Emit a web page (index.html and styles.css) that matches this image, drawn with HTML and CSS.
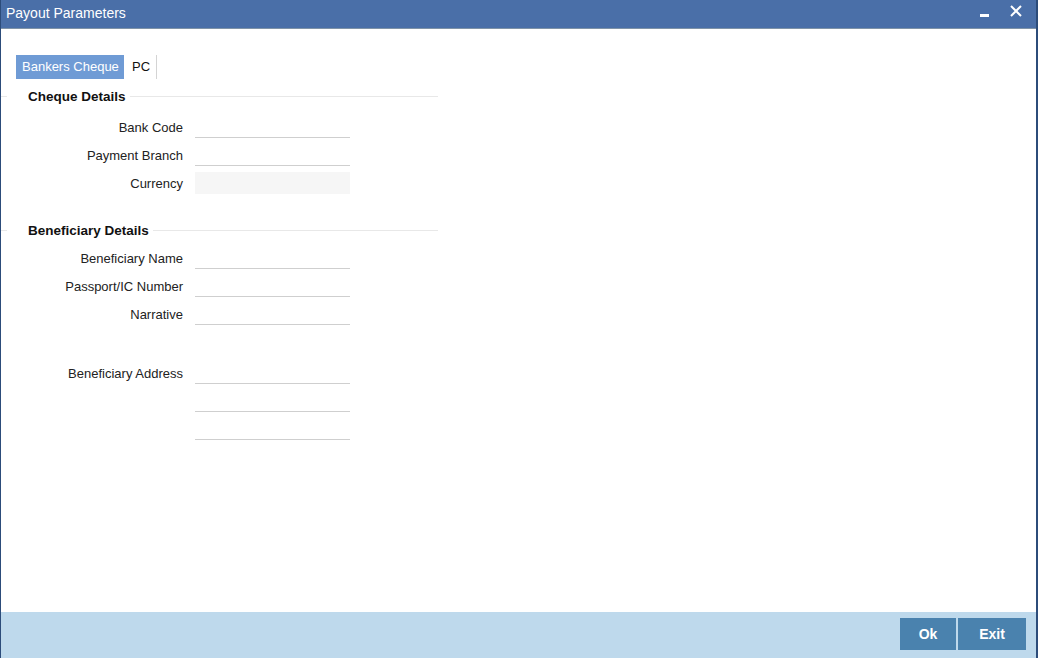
FILE: index.html
```html
<!DOCTYPE html>
<html lang="en">
<head>
  <meta charset="UTF-8">
  <title>Payout Parameters</title>
  <link rel="stylesheet" href="styles.css">
</head>
<body>
  <div class="window">
    <header class="titlebar">
      <span class="title">Payout Parameters</span>
      <div class="controls">
        <span class="minimize"></span>
        <svg class="close" width="12" height="12" viewBox="0 0 12 12">
          <path d="M1 1 L11 11 M11 1 L1 11" stroke="#fff" stroke-width="2"/>
        </svg>
      </div>
    </header>

    <main class="content">
      <!-- Abas -->
      <ul class="tabs">
        <li class="tab active">Bankers Cheque</li>
        <li class="tab">PC</li>
      </ul>

      <!-- Cheque Details -->
      <section class="section">
        <div class="legend"><span>Cheque Details</span></div>
        <div class="fields">
          <div class="row"><label>Bank Code</label><span class="input"></span></div>
          <div class="row"><label>Payment Branch</label><span class="input"></span></div>
          <div class="row"><label>Currency</label><span class="input disabled"></span></div>
        </div>
      </section>

      <!-- Beneficiary Details -->
      <section class="section second">
        <div class="legend"><span>Beneficiary Details</span></div>
        <div class="fields tight">
          <div class="row"><label>Beneficiary Name</label><span class="input"></span></div>
          <div class="row"><label>Passport/IC Number</label><span class="input"></span></div>
          <div class="row"><label>Narrative</label><span class="input"></span></div>
          <div class="row address"><label>Beneficiary Address</label><span class="input"></span></div>
          <div class="row"><label></label><span class="input"></span></div>
          <div class="row"><label></label><span class="input"></span></div>
        </div>
      </section>
    </main>

    <footer class="footer">
      <button class="button">Ok</button>
      <button class="button exit">Exit</button>
    </footer>
  </div>
</body>
</html>
```

FILE: styles.css
```css
/* Estilos Globais */
* {
  margin: 0;
  padding: 0;
  box-sizing: border-box;
}
html, body {
  height: 100%;
}
body {
  font-family: 'Liberation Sans', Arial, sans-serif;
  font-size: 13px;
  color: #222;
  background-color: #fff;
}
.window {
  width: 1038px;
  height: 658px;
  display: flex;
  flex-direction: column;
  border-left: 1px solid #2c4c7a;
  border-right: 2px solid #2c4c7a;
  background-color: #fff;
}

/* Barra de titulo */
.titlebar {
  height: 29px;
  display: flex;
  align-items: center;
  justify-content: space-between;
  padding: 0 14px 0 5px;
  background-color: #4a6fa8;
  border-bottom: 1px solid #7f93a8;
  color: #fff;
}
.title {
  font-size: 14px;
  margin-top: -2px;
}
.controls {
  display: flex;
  align-items: center;
  gap: 21px;
  margin-top: -7px;
}
.minimize {
  width: 9px;
  height: 3px;
  background-color: #fff;
  margin-top: 9px;
}

/* Conteudo */
.content {
  flex: 1;
}
.tabs {
  list-style: none;
  display: flex;
  margin: 26px 0 0 15px;
  font-size: 13px;
}
.tab {
  height: 24px;
  line-height: 24px;
  padding: 0 6px 0 7px;
  border-right: 1px solid #d4d4d4;
  color: #111;
  white-space: nowrap;
}
.tab.active {
  width: 109px;
  padding: 0 6px;
  background-color: #6f9bd5;
  color: #fff;
  border-right: 1px solid #fff;
}

.section {
  margin-top: 7px;
}
.section.second {
  margin-top: 23px;
}
.legend {
  display: flex;
  align-items: center;
  width: 437px;
  height: 20px;
  font-size: 13.5px;
  font-weight: bold;
  color: #111;
}
.legend::before {
  content: "";
  width: 6px;
  border-top: 1px solid #e8e8e8;
  margin-right: 21px;
}
.legend::after {
  content: "";
  flex: 1;
  border-top: 1px solid #e8e8e8;
  margin-left: 4px;
}
.fields {
  margin-top: 7px;
}
.fields.tight {
  margin-top: 4px;
}
.row {
  display: flex;
  align-items: center;
  gap: 12px;
  height: 28px;
}
.row.address {
  margin-top: 31px;
}
.row label {
  width: 182px;
  text-align: right;
  color: #222;
}
.input {
  width: 155px;
  height: 22px;
  border-bottom: 1px solid #cfcfcf;
}
.input.disabled {
  background-color: #f6f6f6;
  border-bottom: 1px solid #f6f6f6;
}

/* Rodape */
.footer {
  height: 46px;
  display: flex;
  justify-content: flex-end;
  align-items: flex-start;
  gap: 2px;
  padding: 6px 10px 0 0;
  background-color: #bed9ec;
}
.button {
  width: 56px;
  height: 32px;
  border: none;
  background-color: #4a82ae;
  color: #fff;
  font-family: 'Liberation Sans', Arial, sans-serif;
  font-size: 14px;
  font-weight: bold;
}
.button.exit {
  width: 68px;
}
```
